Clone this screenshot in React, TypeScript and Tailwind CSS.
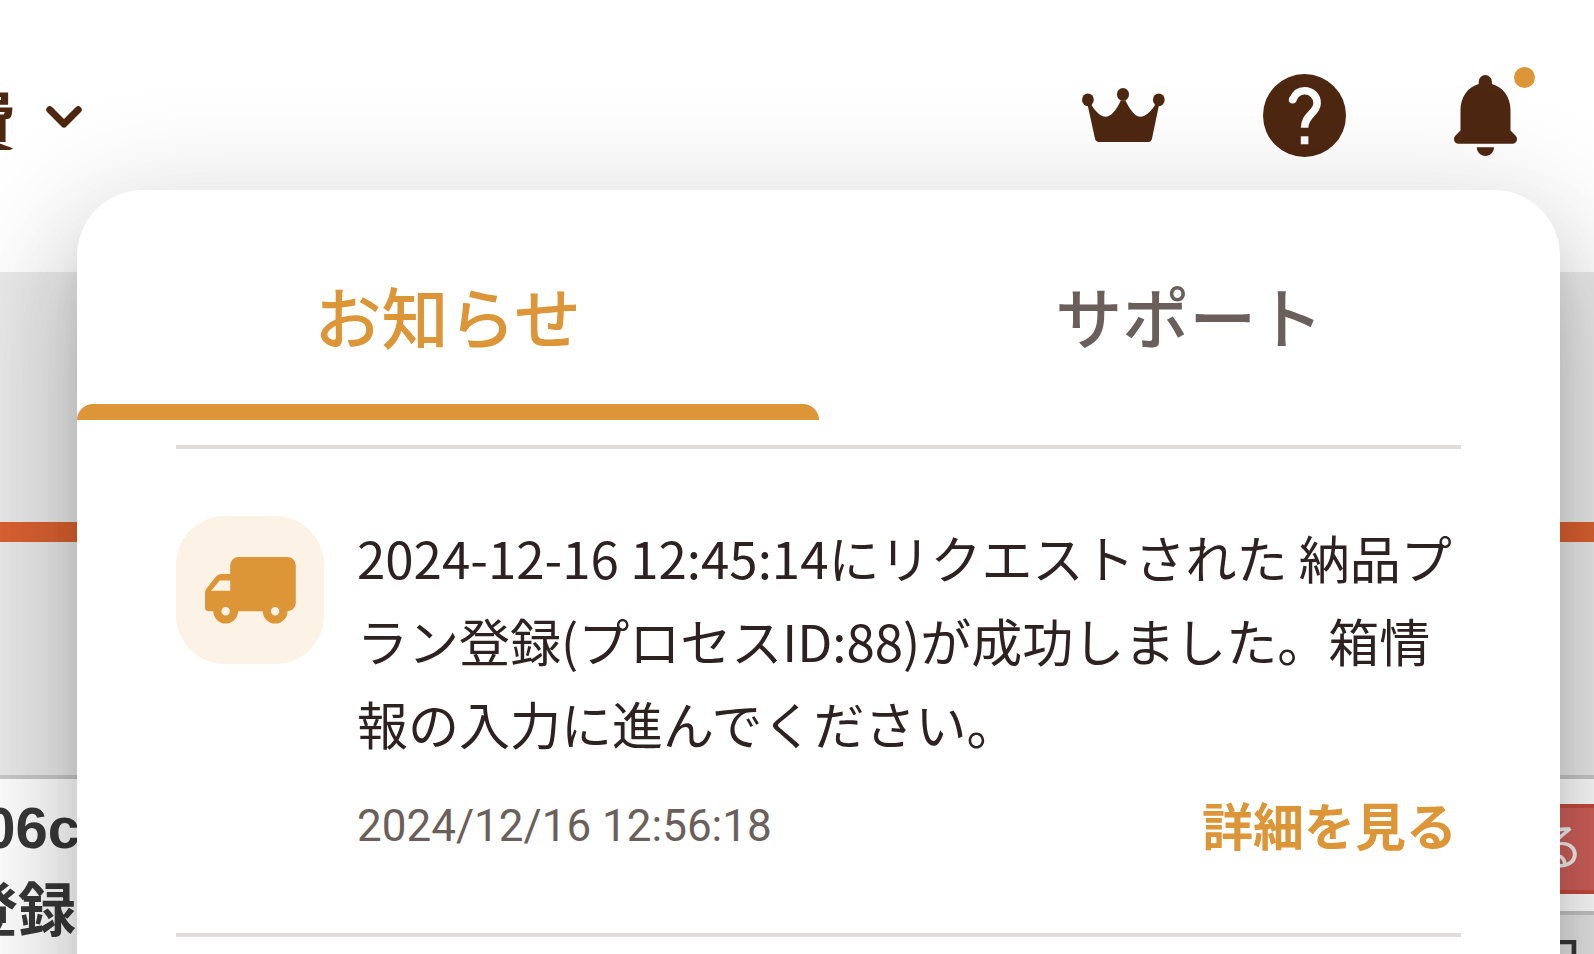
import React, { useState } from 'react';
import clsx from 'clsx';

const CrownIcon = () => (
  <svg viewBox="0 0 83 54" className="h-[54px] w-[83px]" fill="currentColor" aria-hidden="true">
    <ellipse cx="5.9" cy="11.8" rx="5.9" ry="6.4" />
    <ellipse cx="41" cy="6.4" rx="6" ry="6.4" />
    <ellipse cx="76.8" cy="11.8" rx="5.9" ry="6.4" />
    <path d="M5.6 17 9.5 17C14 24.500 19.500 28.800 23.500 28.800 28.500 28.800 34 23 38.800 12.500H43.500C48.500 23 53.500 28.800 58.500 28.800 62.500 28.800 68.500 24.500 73 17L77 17 70 50.500C69.500 52.800 68.500 54 66.500 54H17C14.800 54 13.500 52.800 13 50.500Z" />
  </svg>
);

const HelpIcon = () => (
  <svg viewBox="0 0 83 83" className="size-[83px]" aria-hidden="true">
    <circle cx="41.500" cy="41.500" r="41.500" fill="currentColor" />
    <path d="M29.700 25.800C32 20 36.500 16.800 41.600 16.800 48.500 16.800 54.100 22 54.100 29.200 54.100 39 41.600 41 41.600 53.700" fill="none" stroke="#fcfcfc" strokeWidth="7.600" />
    <circle cx="29.600" cy="25.700" r="3.800" fill="#fcfcfc" />
    <path d="M37.800 62.300h7.600v8h-7.600z" fill="#fcfcfc" />
  </svg>
);

const BellIcon = () => (
  <svg viewBox="0 0 63 81" className="h-[81px] w-[63px]" fill="currentColor" aria-hidden="true">
    <path d="M24.700 9V6.500A6.600 6.500 0 0 1 37.900 6.500V9C49 12 56.500 22 56.500 35V55.500L61.500 60.500C64.500 64 62.500 68.700 59 68.700H4C.5 68.700-1.500 64 1.500 60.500L6.500 55.500V35C6.500 22 14 12 24.700 9Z" />
    <path d="M22.800 72.300H40C40 77.500 36 81 31.400 81S22.800 77.500 22.800 72.300Z" />
  </svg>
);

const ChevronIcon = () => (
  <svg viewBox="0 0 36 22" className="h-[22px] w-9" fill="none" stroke="currentColor" strokeWidth="7" strokeLinecap="round" strokeLinejoin="round" aria-hidden="true">
    <path d="M3.800 3.800 18 18 32.200 3.800" />
  </svg>
);

const TruckIcon = () => (
  <svg viewBox="0 0 91 67" className="h-[67px] w-[91px]" fill="currentColor" fillRule="evenodd" aria-hidden="true">
    <path d="M33.500 0H82.500A8.300 8.300 0 0 1 90.800 8.300V46A8.300 8.300 0 0 1 82.500 54.200 12.300 12.300 0 0 1 57.800 54.200H33A12.300 12.300 0 0 1 8.300 54.200H4A4 4 0 0 1 0 50.200V36Q0 33.500 1.500 31.500L11 19.500Q13 17 15.500 17H25.200V8.300A8.300 8.300 0 0 1 33.500 0ZM14.700 23.400 6.200 33.700H25.200V23.400ZM20.700 50.100A4.200 4.200 0 1 0 20.700 58.500 4.200 4.200 0 1 0 20.700 50.100ZM70.100 50.100A4.200 4.200 0 1 0 70.100 58.500 4.200 4.200 0 1 0 70.100 50.100Z" />
  </svg>
);

interface Notice {
  id: number;
  message: string;
  date: string;
}

const notices: Notice[] = [
  {
    id: 88,
    message: '2024-12-16 12:45:14にリクエストされた 納品プラン登録(プロセスID:88)が成功しました。箱情報の入力に進んでください。',
    date: '2024/12/16 12:56:18',
  },
];

const tabs = ['お知らせ', 'サポート'];

const Header = () => (
  <header className="h-[272px] shrink-0 bg-white text-[#4e2711]">
    <div className="flex h-[230px] items-center justify-between pr-[77px]">
      <button type="button" className="flex items-center gap-[30px] pt-1" aria-label="費用メニュー">
        <span className="flex w-4 justify-end overflow-hidden text-[66px] leading-none font-bold">費</span>
        <ChevronIcon />
      </button>
      <nav className="flex items-center gap-[98px]">
        <button type="button" aria-label="プラン"><CrownIcon /></button>
        <button type="button" aria-label="ヘルプ"><HelpIcon /></button>
        <button type="button" className="relative ml-2.5" aria-label="通知">
          <BellIcon />
          <span className="absolute -top-2 -right-[18px] size-[21px] rounded-full bg-[#dc9537]" />
        </button>
      </nav>
    </div>
  </header>
);

/* The list page that stays behind the popup */
const PageBehind = () => (
  <main className="flex flex-1 flex-col bg-[#e9eae9]">
    <div className="h-[250px] shrink-0" />
    <div className="h-5 shrink-0 bg-[#db6231]" />
    <div className="h-[233px] shrink-0" />
    <div className="flex flex-1 justify-between border-t-4 border-[#c9c9c9] bg-white text-[#383838]">
      <div className="flex w-20 flex-col items-end overflow-hidden pt-2.5 text-[58px] leading-[78px] font-bold whitespace-nowrap">
        <span className="font-['Liberation_Sans',sans-serif]">06c</span>
        <span className="pr-1">登録</span>
      </div>
      <div className="flex w-[120px] flex-col">
        <div className="border-b-4 border-[#c6c6c6] pt-[25px] pb-[17px]">
          <button type="button" className="flex h-[90px] w-full items-center justify-end border-y-4 border-[#c64a3f] bg-[#d0605a] pr-2.5 pb-3 text-[50px] leading-none text-[#f4f2f1]">
            る
          </button>
        </div>
        <div className="flex flex-1 justify-end bg-[#e6e6e6] pt-4 pr-2 text-[58px] leading-none">日</div>
      </div>
    </div>
  </main>
);

const NoticeItem: React.FC<{ notice: Notice }> = ({ notice }) => (
  <li className="flex items-start gap-[33px] border-b-4 border-[#e0ddda] pt-[67px] pb-[65px]">
    <div className="flex size-[148px] shrink-0 items-center justify-center rounded-[49px] bg-[#fcf3e6] text-[#dc9537]">
      <TruckIcon />
    </div>
    <div className="min-w-0 flex-1">
      <p className="text-[51px] leading-[83px] text-[#2d2220]">{notice.message}</p>
      <div className="mt-5 flex items-start justify-between pr-1">
        <time className="font-['Roboto',sans-serif] text-[44px] leading-[83px] text-[#6b5f5b]">{notice.date}</time>
        <a href="#detail" className="text-[51px] leading-[78px] font-bold text-[#dc9537]">詳細を見る</a>
      </div>
    </div>
  </li>
);

const NoticePopup = () => {
  const [active, setActive] = useState(0);

  return (
    <section className="absolute top-[190px] right-[34px] -bottom-60 left-[77px] rounded-[66px] bg-white shadow-[0_33px_41px_-21px_rgba(0,0,0,0.2),0_66px_99px_8px_rgba(0,0,0,0.14),0_25px_124px_21px_rgba(0,0,0,0.12)]">
      <div role="tablist" className="grid grid-cols-2">
        {tabs.map((label, i) => (
          <button
            key={label}
            type="button"
            role="tab"
            aria-selected={i === active}
            onClick={() => setActive(i)}
            className={clsx('flex flex-col text-[67px] font-medium', i === active ? 'text-[#dc9537]' : 'text-[#6b5f5b]')}
          >
            <span className="w-full pt-[75px] pb-[39px] leading-[100px]">{label}</span>
            <span className={clsx('h-4 w-full rounded-t-2xl', i === active && 'bg-[#dc9537]')} />
          </button>
        ))}
      </div>
      <ul className="mx-[99px] mt-[25px] border-t-4 border-[#e0ddda]">
        {notices.map((notice) => (
          <NoticeItem key={notice.id} notice={notice} />
        ))}
      </ul>
    </section>
  );
};

export default function App() {
  return (
    <div className="relative flex h-screen flex-col overflow-hidden font-['Noto_Sans_CJK_JP',sans-serif]" lang="ja">
      <Header />
      <PageBehind />
      <NoticePopup />
    </div>
  );
}
